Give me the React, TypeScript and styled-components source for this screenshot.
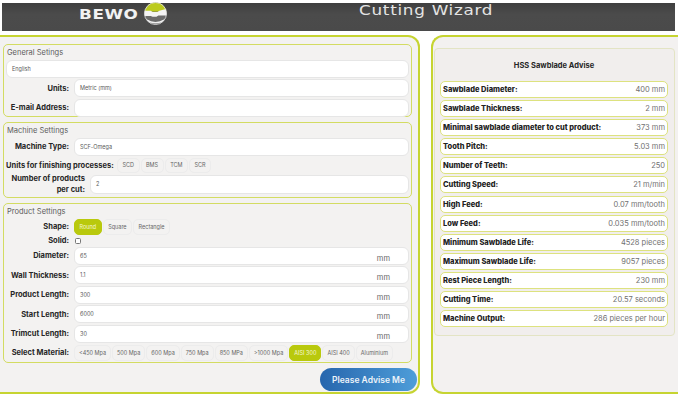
import React from "react";
import styled, { createGlobalStyle } from "styled-components";

const GlobalStyle = createGlobalStyle`
  html, body {
    margin: 0;
    padding: 0;
    background: #fff;
    font-family: "Inter", "Liberation Sans", sans-serif;
  }
`;

const Page = styled.div`
  width: 678px;
  height: 404px;
  overflow: hidden;
  padding-top: 3px;
  box-sizing: border-box;
`;

const Header = styled.div`
  height: 28px;
  margin: 0 3px 0 2px;
  background: linear-gradient(#3f3f3f 0, #4b4b4b 40%, #4a4a4a 100%);
  display: flex;
  align-items: flex-start;
  padding-left: 77px;
`;

const Logo = styled.div`
  display: flex;
  align-items: center;
  gap: 4px;
  width: 280px;
  margin-top: -1px;
`;

const LogoText = styled.span`
  display: inline-block;
  width: 61px;
  font-family: "DejaVu Sans", sans-serif;
  font-weight: 700;
  font-size: 14px;
  line-height: 22px;
  letter-spacing: 0.5px;
  color: #f2f2f2;
  transform: scaleX(1.2);
  transform-origin: left center;
`;

const Title = styled.div`
  font-family: "DejaVu Sans", sans-serif;
  font-size: 14px;
  line-height: 14px;
  letter-spacing: 0.6px;
  white-space: nowrap;
  color: #e4e4e4;
  transform: scaleX(1.2);
  transform-origin: left center;
`;

const Main = styled.div`
  display: grid;
  grid-template-columns: 420px 1fr;
  column-gap: 11px;
  margin-top: 4px;
  height: 359px;
`;

const LeftPanel = styled.div`
  background: #f3f2f1;
  border: 2px solid #c6d431;
  border-left: none;
  border-radius: 0 12px 12px 0;
  padding: 7px 6px 0 3px;
  box-sizing: border-box;
  display: flex;
  flex-direction: column;
  gap: 5px;
`;

const RightPanel = styled.div`
  background: #f3f1f0;
  border: 2px solid #c6d431;
  border-right: none;
  border-radius: 12px 0 0 12px;
  padding: 11px 3px 0 1px;
  box-sizing: border-box;
`;

const Card = styled.div`
  border: 1.5px solid #d3dc62;
  border-radius: 5px;
  padding: 3px 2px 2px 2px;
  box-sizing: border-box;
  height: ${(p: { $h: number }) => p.$h}px;
  display: flex;
  flex-direction: column;
  gap: 1.5px;
`;

const CardTitle = styled.div`
  font-size: 7.5px;
  line-height: 10px;
  color: #5c5c5c;
  margin-left: 1px;
`;

const Row = styled.div`
  display: flex;
  align-items: center;
  height: ${(p: { $h?: number }) => p.$h ?? 18}px;
  flex: none;
`;

const Label = styled.label<{ $w?: number; $nowrap?: boolean }>`
  width: ${(p) => p.$w ?? 63}px;
  flex: none;
  text-align: right;
  white-space: ${(p) => (p.$nowrap ? "nowrap" : "normal")};
  font-size: 7.5px;
  line-height: 11px;
  font-weight: 700;
  color: #262626;
  padding-right: 5px;
`;

const Field = styled.div`
  flex: 1;
  height: 100%;
  position: relative;
  background: #fff;
  border: 1px solid #e6e6e6;
  border-radius: 6px;
  box-sizing: border-box;
  display: flex;
  align-items: center;
  padding-left: 5px;
  font-size: 5.5px;
  color: #5a5a5a;
`;

const Unit = styled.span`
  position: absolute;
  right: 18px;
  top: 6px;
  font-size: 7.5px;
  color: #666;
`;

const ToggleGroup = styled.div`
  display: flex;
  align-items: center;
  gap: 1px;
`;

const Toggle = styled.div<{ $active?: boolean; $h?: number; $tight?: boolean }>`
  height: ${(p) => p.$h ?? 16}px;
  padding: 0 ${(p) => (p.$tight ? 4 : 4.5)}px;
  display: flex;
  align-items: center;
  border: 1px solid ${(p) => (p.$active ? "#b9c90d" : "#ececec")};
  border-radius: 5px;
  background: ${(p) => (p.$active ? "#b9c90d" : "#f3f2f1")};
  color: ${(p) => (p.$active ? "#f6f7d8" : "#666")};
  font-size: 5.5px;
  box-sizing: border-box;
`;

const Check = styled.input.attrs({ type: "checkbox" })`
  width: 6px;
  height: 6px;
  margin: 0 0 0 1px;
  appearance: none;
  background: #fff;
  border: 1px solid #777;
  border-radius: 1.5px;
`;

const Footer = styled.div`
  display: flex;
  justify-content: flex-end;
  margin-right: -5px;
`;

const AdviseButton = styled.button`
  width: 97px;
  height: 23px;
  border: none;
  border-radius: 12px;
  background: linear-gradient(90deg, #2766ad, #4d9dd9);
  color: #eef4fa;
  font-family: inherit;
  font-size: 8.5px;
  font-weight: 600;
  padding: 0;
`;

const AdviseCard = styled.div`
  background: #f1eeed;
  border: 1px solid #e3e4c4;
  border-radius: 4px;
  height: 288px;
  padding: 0 6px 0 5px;
  box-sizing: border-box;
`;

const AdviseTitle = styled.div`
  font-size: 7.5px;
  font-weight: 700;
  line-height: 10px;
  color: #262626;
  text-align: center;
  padding: 12px 0 10px;
`;

const AdviseList = styled.div`
  display: flex;
  flex-direction: column;
  gap: 2.1px;
`;

const AdviseRow = styled.div`
  height: 17px;
  display: flex;
  align-items: center;
  justify-content: space-between;
  background: #fff;
  border: 1px solid #dde27f;
  border-radius: 5px;
  padding: 0 2px;
  box-sizing: border-box;
`;

const AdviseName = styled.span`
  font-size: 7.5px;
  font-weight: 800;
  color: #222;
`;

const AdviseValue = styled.span`
  font-size: 7.5px;
  color: #707070;
`;

const BewoMark = () => (
  <svg width="23" height="23" viewBox="0 0 24 24">
    <defs>
      <clipPath id="disc">
        <circle cx="12" cy="12" r="11.5" />
      </clipPath>
    </defs>
    <g clipPath="url(#disc)">
      <rect width="24" height="24" fill="#6b6b6b" />
      <rect width="24" height="10" fill="#bccb1f" />
      <path d="M0 9h7l2 1.5h5l2-1.5 8-2v7H15l-2 1.5H9L7 14.5H0z" fill="#f4f4f4" />
      <path d="M3 19c5 3.5 13 3.5 18 0" fill="none" stroke="#efefef" strokeWidth="1.6" />
    </g>
    <circle cx="12" cy="12" r="11.5" fill="none" stroke="#e9e9e9" strokeWidth="0.8" />
  </svg>
);

const materials = [
  "<450 Mpa",
  "500 Mpa",
  "600 Mpa",
  "750 Mpa",
  "850 MPa",
  ">1000 Mpa",
  "AISI 300",
  "AISI 400",
  "Aluminium",
];

const lengths = [
  ["Diameter:", "65"],
  ["Wall Thickness:", "1.1"],
  ["Product Length:", "300"],
  ["Start Length:", "6000"],
  ["Trimcut Length:", "30"],
];

const advice = [
  ["Sawblade Diameter:", "400 mm"],
  ["Sawblade Thickness:", "2 mm"],
  ["Minimal sawblade diameter to cut product:", "373 mm"],
  ["Tooth Pitch:", "5.03 mm"],
  ["Number of Teeth:", "250"],
  ["Cutting Speed:", "21 m/min"],
  ["High Feed:", "0.07 mm/tooth"],
  ["Low Feed:", "0.035 mm/tooth"],
  ["Minimum Sawblade Life:", "4528 pieces"],
  ["Maximum Sawblade Life:", "9057 pieces"],
  ["Rest Piece Length:", "230 mm"],
  ["Cutting Time:", "20.57 seconds"],
  ["Machine Output:", "286 pieces per hour"],
];

export default function App() {
  return (
    <Page>
      <GlobalStyle />
      <Header>
        <Logo>
          <LogoText>BEWO</LogoText>
          <BewoMark />
        </Logo>
        <Title>Cutting Wizard</Title>
      </Header>
      <Main>
        <LeftPanel>
          <Card $h={73}>
            <CardTitle>General Setings</CardTitle>
            <Row>
              <Field>English</Field>
            </Row>
            <Row>
              <Label>Units:</Label>
              <Field>Metric (mm)</Field>
            </Row>
            <Row>
              <Label>E-mail Address:</Label>
              <Field />
            </Row>
          </Card>
          <Card $h={76}>
            <CardTitle>Machine Settings</CardTitle>
            <Row>
              <Label>Machine Type:</Label>
              <Field>SCF-Omega</Field>
            </Row>
            <Row $h={16}>
              <Label $w={106} $nowrap>
                Units for finishing processes:
              </Label>
              <ToggleGroup>
                <Toggle $h={15}>SCD</Toggle>
                <Toggle $h={15}>BMS</Toggle>
                <Toggle $h={15}>TCM</Toggle>
                <Toggle $h={15}>SCR</Toggle>
              </ToggleGroup>
            </Row>
            <Row $h={19}>
              <Label $w={79}>Number of products per cut:</Label>
              <Field>2</Field>
            </Row>
          </Card>
          <Card $h={160}>
            <CardTitle>Product Settings</CardTitle>
            <Row $h={16}>
              <Label>Shape:</Label>
              <ToggleGroup>
                <Toggle $active>Round</Toggle>
                <Toggle>Square</Toggle>
                <Toggle>Rectangle</Toggle>
              </ToggleGroup>
            </Row>
            <Row $h={9}>
              <Label>Solid:</Label>
              <Check />
            </Row>
            {lengths.map(([name, value]) => (
              <Row key={name}>
                <Label>{name}</Label>
                <Field>
                  {value}
                  <Unit>mm</Unit>
                </Field>
              </Row>
            ))}
            <Row $h={17}>
              <Label>Select Material:</Label>
              <ToggleGroup>
                {materials.map((m) => (
                  <Toggle key={m} $tight $active={m === "AISI 300"}>
                    {m}
                  </Toggle>
                ))}
              </ToggleGroup>
            </Row>
          </Card>
          <Footer>
            <AdviseButton>Please Advise Me</AdviseButton>
          </Footer>
        </LeftPanel>
        <RightPanel>
          <AdviseCard>
            <AdviseTitle>HSS Sawblade Advise</AdviseTitle>
            <AdviseList>
              {advice.map(([name, value]) => (
                <AdviseRow key={name}>
                  <AdviseName>{name}</AdviseName>
                  <AdviseValue>{value}</AdviseValue>
                </AdviseRow>
              ))}
            </AdviseList>
          </AdviseCard>
        </RightPanel>
      </Main>
    </Page>
  );
}
